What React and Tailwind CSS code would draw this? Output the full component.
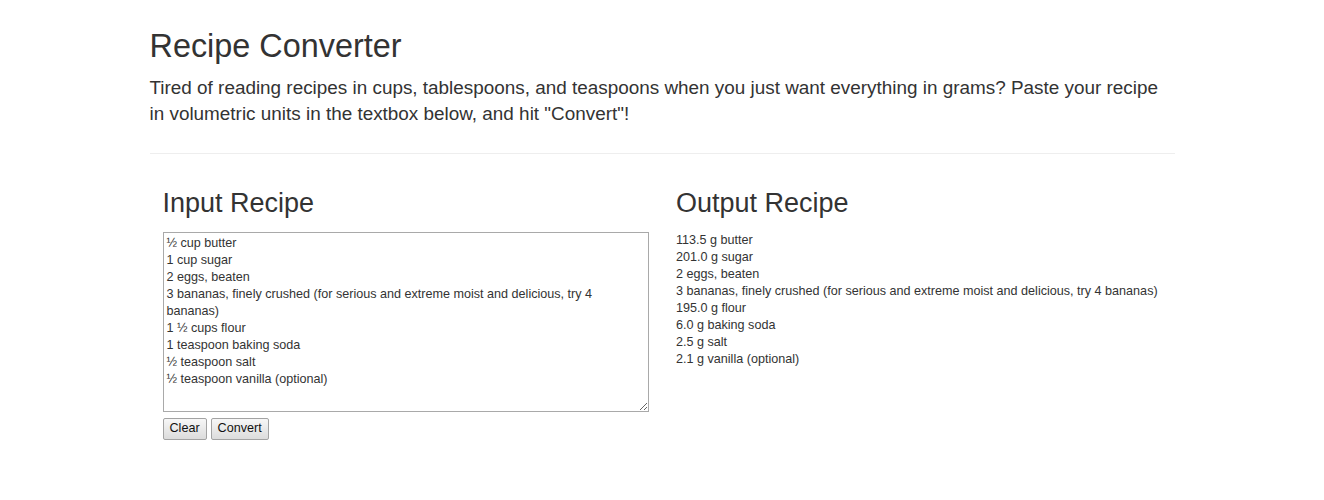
import { useState } from 'react';

const INPUT = `½ cup butter
1 cup sugar
2 eggs, beaten
3 bananas, finely crushed (for serious and extreme moist and delicious, try 4 bananas)
1 ½ cups flour
1 teaspoon baking soda
½ teaspoon salt
½ teaspoon vanilla (optional)`;

const OUTPUT = [
    '113.5 g butter',
    '201.0 g sugar',
    '2 eggs, beaten',
    '3 bananas, finely crushed (for serious and extreme moist and delicious, try 4 bananas)',
    '195.0 g flour',
    '6.0 g baking soda',
    '2.5 g salt',
    '2.1 g vanilla (optional)'
];

export default function App() {
    const [recipe, setRecipe] = useState(INPUT);

    const btn = 'h-[22px] px-[6px] text-[12.6px] leading-none text-[#111] border border-[#a3a3a3] rounded-[2px] bg-gradient-to-b from-[#f7f7f7] to-[#dcdcdc]';

    return (
        <div className="min-h-[500px] bg-white text-[#333] font-['Liberation_Sans',Arial,sans-serif] text-[12.6px] leading-[17px]">
            <div className="w-[1025px] mx-auto pt-[29px]">
                {/* Header */}
                <h1 className="text-[32.4px] leading-[35.6px] font-normal mb-[10.4px]">Recipe Converter</h1>
                <p className="max-w-[1015px] text-[18.9px] leading-[26.5px]">
                    Tired of reading recipes in cups, tablespoons, and teaspoons when you just want everything in grams? Paste your recipe in volumetric units in the textbox below, and hit "Convert"!
                </p>
                <hr className="mt-[25px] border-0 border-t border-[#eee]" />

                <div className="flex mt-[35px]">
                    {/* Input column */}
                    <div className="w-1/2 px-[13px]">
                        <h2 className="text-[27px] leading-[29.7px] font-normal mb-[13px]">Input Recipe</h2>
                        <textarea
                            className="block w-full h-[180px] border border-[#a9a9a9] pl-[3px] pr-[2px] pt-[2px] text-[12.6px] leading-[17px] text-[#333] outline-none resize"
                            value={recipe}
                            onChange={(e) => setRecipe(e.target.value)}
                        />
                        <div className="flex gap-[4px] mt-[6px]">
                            <button className={btn} onClick={() => setRecipe('')}>Clear</button>
                            <button className={btn}>Convert</button>
                        </div>
                    </div>

                    {/* Output column */}
                    <div className="w-1/2 pl-[14px] pr-[13px]">
                        <h2 className="text-[27px] leading-[29.7px] font-normal mb-[13px]">Output Recipe</h2>
                        <div>
                            {OUTPUT.map((line, i) => (
                                <div key={i}>{line}</div>
                            ))}
                        </div>
                    </div>
                </div>
            </div>
        </div>
    );
}
